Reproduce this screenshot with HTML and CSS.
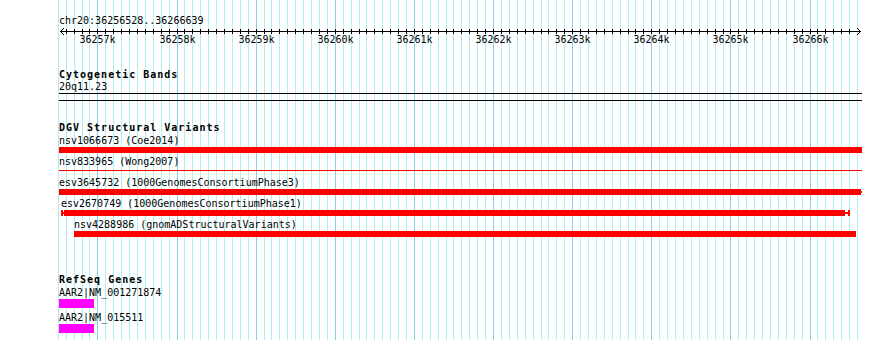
FILE: index.html
```html
<!DOCTYPE html>
<html lang="en">
<head>
  <meta charset="UTF-8" />
  <title>chr20:36256528..36266639</title>
  <link rel="stylesheet" href="styles.css">
</head>
<body>
  <div class="browser">
    <svg class="grid" id="grid" width="890" height="340"></svg>

    <div class="tracks">
      <div class="locus">chr20:36256528..36266639</div>

      <div class="track cyto">
        <div class="track-title">Cytogenetic Bands</div>
        <div class="label">20q11.23</div>
        <div class="band"></div>
      </div>

      <div class="track dgv">
        <div class="track-title">DGV Structural Variants</div>

        <div class="feature">
          <div class="label">nsv1066673 (Coe2014)</div>
          <div class="bar"><span class="block" style="width: 803px"></span></div>
        </div>

        <div class="feature">
          <div class="label">nsv833965 (Wong2007)</div>
          <div class="bar"><span class="thin" style="width: 803px"></span></div>
        </div>

        <div class="feature">
          <div class="label">esv3645732 (1000GenomesConsortiumPhase3)</div>
          <div class="bar">
            <span class="block" style="width: 802px"></span>
            <span class="stem" style="width: 1px"></span>
          </div>
        </div>

        <div class="feature" style="margin-left: 2px">
          <div class="label">esv2670749 (1000GenomesConsortiumPhase1)</div>
          <div class="bar">
            <span class="cap"></span>
            <span class="stem" style="width: 1px"></span>
            <span class="block" style="width: 781px"></span>
            <span class="stem" style="width: 3px"></span>
            <span class="cap"></span>
          </div>
        </div>

        <div class="feature" style="margin-left: 15px">
          <div class="label">nsv4288986 (gnomADStructuralVariants)</div>
          <div class="bar"><span class="block" style="width: 782px"></span></div>
        </div>
      </div>

      <div class="track refseq">
        <div class="track-title">RefSeq Genes</div>

        <div class="gene">
          <div class="label">AAR2|NM_001271874</div>
          <div class="exon" style="width: 35px"></div>
        </div>

        <div class="gene">
          <div class="label">AAR2|NM_015511</div>
          <div class="exon" style="width: 35px"></div>
        </div>
      </div>
    </div>
  </div>

  <script>
    // grid lines + ruler, one line every 100bp
    const grid = document.getElementById("grid");
    const NS = "http://www.w3.org/2000/svg";
    const origin = 36257000; // sits at x = 97.9
    const x0 = 97.9;
    const step = 7.913;      // px per 100bp

    function add(tag, attrs, text) {
      const el = document.createElementNS(NS, tag);
      for (const [k, v] of Object.entries(attrs)) {
        el.setAttribute(k, v);
      }
      if (text) el.textContent = text;
      grid.appendChild(el);
      return el;
    }

    function xAt(pos) {
      return Math.floor(x0 + (pos - origin) / 100 * step) + 0.5;
    }

    for (let pos = 36256500; pos <= 36266600; pos += 100) {
      const major = pos % 1000 === 0;
      add("line", { x1: xAt(pos), x2: xAt(pos), y1: 0, y2: 340, class: major ? "major" : "minor" });
    }

    // ruler
    add("line", { x1: 60, x2: 861, y1: 31.5, y2: 31.5, class: "axis" });
    add("polyline", { points: "64,28 60.5,31.5 64,35", class: "axis" });
    add("polyline", { points: "857,28 860.5,31.5 857,35", class: "axis" });

    for (let pos = 36256600; pos <= 36266500; pos += 100) {
      const x = xAt(pos);
      add("line", { x1: x, x2: x, y1: 29, y2: 34, class: "axis" });
      if (pos % 1000 === 0) {
        add("text", { x: x, y: 43, "text-anchor": "middle" }, (pos / 1000) + "k");
      }
    }
  </script>
</body>
</html>
```

FILE: styles.css
```css
body {
  margin: 0;
  background: #fff;
  color: #000;
  font-family: "DejaVu Sans Mono", "Liberation Mono", monospace;
  font-size: 10px;
  line-height: 10px;
}

.browser {
  position: relative;
  width: 890px;
  height: 340px;
  overflow: hidden;
}

/* 背景格線與尺規 */
.grid {
  position: absolute;
  left: 0;
  top: 0;
  shape-rendering: crispEdges;
}
.grid .minor {
  stroke: #afeeee;
}
.grid .major {
  stroke: #87ceeb;
}
.grid .axis {
  stroke: #000;
  fill: none;
}
.grid text {
  font-family: "DejaVu Sans Mono", "Liberation Mono", monospace;
  font-size: 10px;
  fill: #000;
}

.tracks {
  position: relative;
  padding-left: 59px;
}
.locus {
  padding-top: 16px;
  height: 10px;
  white-space: nowrap;
}
.label {
  height: 10px;
  white-space: nowrap;
}
.track-title {
  height: 10px;
  font-weight: bold;
  letter-spacing: 1px;
  margin-bottom: 3px;
  white-space: nowrap;
}

/* 染色體帶 */
.cyto {
  margin-top: 44px;
}
.cyto .track-title {
  margin-bottom: 2px;
}
.band {
  margin-top: 1px;
  width: 803px;
  height: 6px;
  border-top: 1px solid #000;
  border-bottom: 1px solid #000;
}

/* 結構變異 */
.dgv {
  margin-top: 22px;
}
.feature {
  padding-bottom: 4px;
}
.bar {
  display: flex;
  align-items: center;
  height: 6px;
  margin-top: 1px;
}
.block {
  height: 6px;
  background: #f00;
}
.thin {
  height: 1px;
  margin-bottom: 1px;
  background: #f00;
}
.stem {
  height: 2px;
  background: #f00;
}
.cap {
  width: 2px;
  height: 6px;
  background: #f00;
}

/* 基因 */
.refseq {
  margin-top: 34px;
}
.gene {
  padding-bottom: 5px;
}
.exon {
  height: 9px;
  margin-top: 1px;
  background: #f0f;
}
```
